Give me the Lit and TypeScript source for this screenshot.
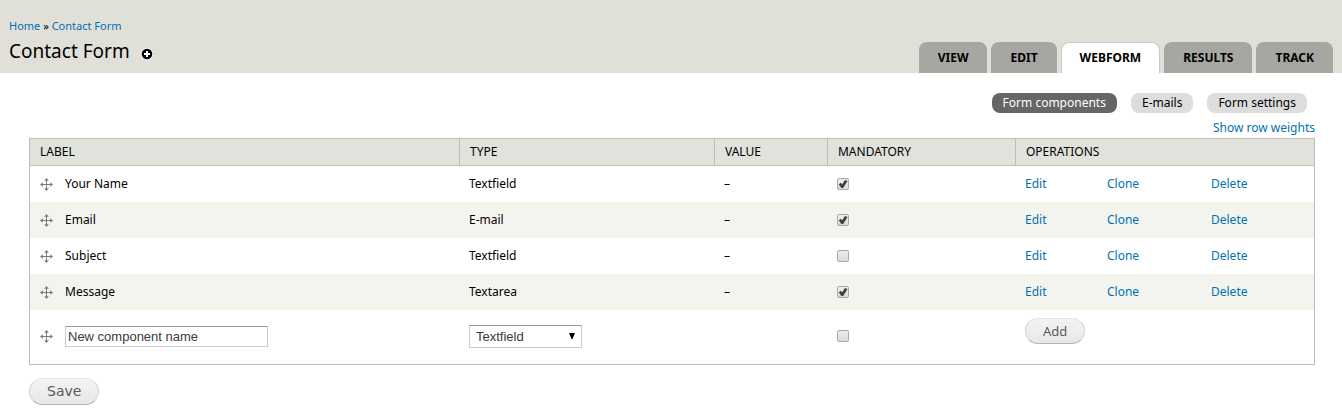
import { LitElement, html, css, svg } from "lit";
import { customElement, property } from "lit/decorators.js";
import { classMap } from "lit/directives/class-map.js";

interface Component {
  label: string;
  type: string;
  mandatory: boolean;
}

const components: Component[] = [
  { label: "Your Name", type: "Textfield", mandatory: true },
  { label: "Email", type: "E-mail", mandatory: true },
  { label: "Subject", type: "Textfield", mandatory: false },
  { label: "Message", type: "Textarea", mandatory: true },
];

const shared = css`
  * {
    box-sizing: border-box;
  }
  a {
    color: #0071b3;
    text-decoration: none;
  }
  a:hover {
    text-decoration: underline;
  }
  .button {
    display: block;
    border: 1px solid #e4e4e4;
    border-bottom-color: #b4b4b4;
    border-left-color: #d2d2d2;
    border-right-color: #d2d2d2;
    border-radius: 20px;
    background: linear-gradient(#f3f3f3, #e8e8e8);
    color: #5a5a5a;
    font-weight: 400;
    padding: 0 17px;
    cursor: pointer;
  }
`;

const moveIcon = svg`
  <svg width="13" height="13" viewBox="0 0 13 13" fill="#7c7c7c" aria-hidden="true">
    <path d="M6 1h1v5h5v1H7v5H6V7H1V6h5z" />
    <path d="M6.500 0L8.800 2.800H4.200zM6.500 13L4.200 10.200h4.600zM0 6.500L2.800 4.200v4.600zM13 6.500L10.200 8.800V4.200z" />
  </svg>`;

@customElement("page-header")
class PageHeader extends LitElement {
  static styles = [
    shared,
    css`
      :host {
        display: flex;
        justify-content: space-between;
        align-items: flex-end;
        background: #e0e0d8;
        padding: 18px 9px 0;
      }
      .breadcrumb {
        font-size: 11px;
        line-height: 16px;
      }
      .title-row {
        display: flex;
        align-items: center;
        gap: 11px;
        padding: 5px 0 9px;
      }
      .title {
        margin: 0;
        font-size: 19px;
        line-height: 25px;
        font-weight: 400;
      }
      .shortcut {
        display: block;
        margin-top: 4px;
      }
      .shortcut svg {
        display: block;
      }
      .tabs {
        display: flex;
        gap: 4px;
      }
      .tab {
        display: block;
        height: 31px;
        padding: 0 18px;
        border: 1px solid #a6a7a2;
        border-bottom: 0;
        border-radius: 8px 8px 0 0;
        background: #a6a7a2;
        color: #000;
        font-size: 12px;
        font-weight: 700;
        line-height: 29px;
        text-transform: uppercase;
      }
      .tab.active {
        background: #fff;
        border-color: #c9cac4;
      }
    `,
  ];

  render() {
    const tabs = ["View", "Edit", "Webform", "Results", "Track"];
    return html`
      <div>
        <nav class="breadcrumb" aria-label="Breadcrumb">
          <a href="#">Home</a> » <a href="#">Contact Form</a>
        </nav>
        <div class="title-row">
          <h1 class="title">Contact Form</h1>
          <a class="shortcut" href="#" aria-label="Add to shortcuts">
            <svg width="12" height="12" viewBox="0 0 12 12">
              <circle cx="6" cy="6" r="6" fill="#fff" />
              <circle cx="6" cy="6" r="5.300" />
              <path d="M5 3h2v2h2v2H7v2H5V7H3V5h2z" fill="#fff" />
            </svg>
          </a>
        </div>
      </div>
      <nav class="tabs" aria-label="Primary tabs">
        ${tabs.map(
          (t) => html`<a href="#" class=${classMap({ tab: true, active: t === "Webform" })}>${t}</a>`
        )}
      </nav>
    `;
  }
}

@customElement("component-table")
class ComponentTable extends LitElement {
  @property({ attribute: false }) rows: Component[] = [];

  static styles = [
    shared,
    css`
      :host {
        display: block;
      }
      .table {
        width: 100%;
        table-layout: fixed;
        border: 1px solid #bebfb9;
        border-spacing: 0;
      }
      .col-type {
        width: 255px;
      }
      .col-value {
        width: 113px;
      }
      .col-mandatory {
        width: 188px;
      }
      .col-edit {
        width: 82px;
      }
      .col-clone {
        width: 104px;
      }
      .col-delete {
        width: 113px;
      }
      th {
        height: 27px;
        padding: 0 10px;
        background: #e1e2dc;
        border-bottom: 1px solid #bebfb9;
        font-weight: 400;
        text-align: left;
        text-transform: uppercase;
      }
      th + th {
        border-left: 1px solid #bebfb9;
      }
      td {
        height: 36px;
        padding: 0 10px;
      }
      .even td {
        background: #f3f4ee;
      }
      .new td {
        height: 54px;
        padding-bottom: 2px;
      }
      .new .top {
        padding-top: 8px;
        vertical-align: top;
      }
      .label-cell {
        display: flex;
        align-items: center;
        gap: 12px;
      }
      .handle {
        display: block;
        width: 13px;
        height: 13px;
        cursor: move;
      }
      .handle svg {
        display: block;
      }
      .check {
        appearance: none;
        display: block;
        width: 12px;
        height: 12px;
        margin: 0;
        border: 1px solid #a8a8a8;
        border-radius: 2px;
        background: linear-gradient(#eee, #dcdcdc);
      }
      .check:checked::before {
        content: "";
        display: block;
        width: 10px;
        height: 10px;
        background: #404040;
        clip-path: polygon(8% 54%, 26% 38%, 42% 52%, 70% 10%, 96% 20%, 52% 90%, 34% 90%);
      }
      .text {
        width: 203px;
        height: 21px;
        padding: 0 2px;
        border: 1px solid #ccc;
        border-top-color: #999;
        background: #fff;
        color: #3b3b3b;
        font: 13px/19px "Liberation Sans", Arial, sans-serif;
      }
      .select-box {
        display: grid;
        width: 113px;
        align-items: center;
      }
      .select {
        grid-area: 1 / 1;
        appearance: none;
        width: 100%;
        height: 23px;
        padding: 0 6px;
        border: 1px solid #ccc;
        border-top-color: #999;
        border-radius: 0;
        background: #fff;
        color: #3b3b3b;
        font: 13px/21px "Liberation Sans", Arial, sans-serif;
      }
      .arrow {
        grid-area: 1 / 1;
        justify-self: end;
        margin-right: 7px;
        pointer-events: none;
      }
      .add {
        height: 26px;
        font: 13px/24px "Noto Sans", sans-serif;
      }
    `,
  ];

  render() {
    return html`
      <table class="table">
        <colgroup>
          <col />
          <col class="col-type" />
          <col class="col-value" />
          <col class="col-mandatory" />
          <col class="col-edit" />
          <col class="col-clone" />
          <col class="col-delete" />
        </colgroup>
        <thead>
          <tr>
            <th>Label</th>
            <th>Type</th>
            <th>Value</th>
            <th>Mandatory</th>
            <th colspan="3">Operations</th>
          </tr>
        </thead>
        <tbody>
          ${this.rows.map(
            (r, i) => html`
              <tr class=${classMap({ even: i % 2 === 1 })}>
                <td>
                  <div class="label-cell"><span class="handle">${moveIcon}</span>${r.label}</div>
                </td>
                <td>${r.type}</td>
                <td>–</td>
                <td>
                  <input class="check" type="checkbox" aria-label="${r.label} mandatory" .checked=${r.mandatory} />
                </td>
                <td><a href="#">Edit</a></td>
                <td><a href="#">Clone</a></td>
                <td><a href="#">Delete</a></td>
              </tr>
            `
          )}
          <tr class="new">
            <td>
              <div class="label-cell">
                <span class="handle">${moveIcon}</span>
                <input class="text" type="text" aria-label="New component name" value="New component name" />
              </div>
            </td>
            <td>
              <div class="select-box">
                <select class="select" aria-label="Type">
                  <option>Textfield</option>
                  <option>E-mail</option>
                  <option>Textarea</option>
                </select>
                <svg class="arrow" width="6" height="6" viewBox="0 0 6 6" aria-hidden="true">
                  <path d="M0 0h6L3.500 6h-1z" />
                </svg>
              </div>
            </td>
            <td></td>
            <td><input class="check" type="checkbox" aria-label="New component mandatory" /></td>
            <td class="top" colspan="3"><button class="button add">Add</button></td>
          </tr>
        </tbody>
      </table>
    `;
  }
}

@customElement("app-root")
class AppRoot extends LitElement {
  static styles = [
    shared,
    css`
      :host {
        display: block;
        background: #fff;
        color: #000;
        font: 12px/18px "Noto Sans", sans-serif;
      }
      .content {
        padding: 20px 27px 12px 29px;
      }
      .pills {
        display: flex;
        justify-content: flex-end;
        gap: 14px;
        padding-right: 8px;
      }
      .pill {
        padding: 0 11px;
        border-radius: 8px;
        background: #ddd;
        color: #000;
        line-height: 20px;
      }
      .pill.active {
        background: #666;
        color: #fff;
      }
      .weights {
        display: flex;
        justify-content: flex-end;
        padding: 6px 0 1px;
      }
      .save {
        height: 27px;
        margin-top: 13px;
        font: 14px/25px "DejaVu Sans", Verdana, sans-serif;
      }
    `,
  ];

  render() {
    const pills = ["Form components", "E-mails", "Form settings"];
    return html`
      <page-header></page-header>
      <main class="content">
        <nav class="pills" aria-label="Secondary tabs">
          ${pills.map(
            (p, i) => html`<a href="#" class=${classMap({ pill: true, active: i === 0 })}>${p}</a>`
          )}
        </nav>
        <div class="weights"><a href="#">Show row weights</a></div>
        <component-table .rows=${components}></component-table>
        <button class="button save">Save</button>
      </main>
    `;
  }
}
